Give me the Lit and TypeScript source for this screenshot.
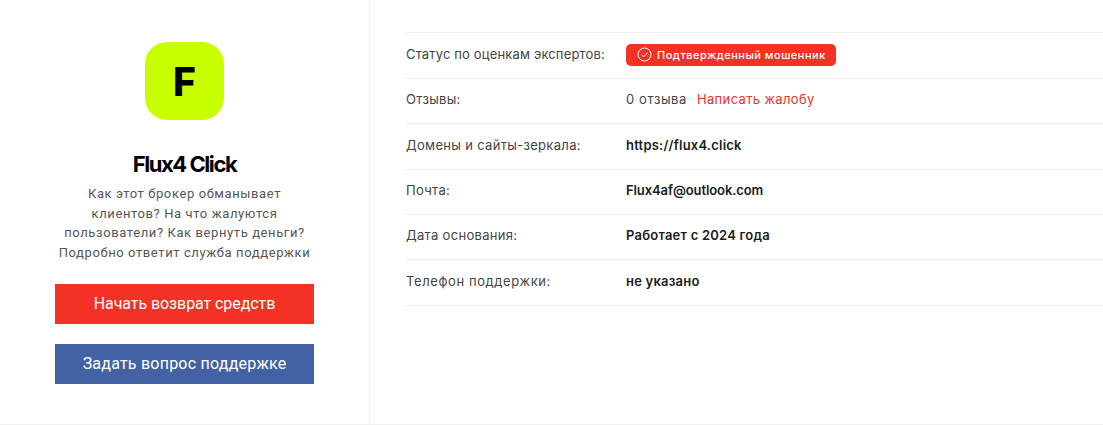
import { LitElement, html, css } from "lit";
import { customElement } from "lit/decorators.js";

const rows: [string, string, string, string][] = [
  ["Домены и сайты-зеркала:", "https://flux4.click", "url", ""],
  ["Почта:", "Flux4af@outlook.com", "mail", ""],
  ["Дата основания:", "Работает с 2024 года", "", ""],
  ["Телефон поддержки:", "не указано", "", "wide"],
];

@customElement("app-root")
export class AppRoot extends LitElement {
  static styles = css`
    :host { display: block; width: 1103px; height: 425px; overflow: hidden; background: #fff; font-family: "Open Sans", sans-serif; }
    .page { display: flex; height: 424px; border-bottom: 1px solid #f0f0f0; }
    .side { box-sizing: border-box; border-right: 1px solid #f0f0f0; flex: none; display: flex; flex-direction: column; align-items: center; padding: 42px 55px 0 55px; width: 370px; }
    .logo { width: 79px; height: 78px; border-radius: 22px; background: #c8ff00; display: flex; align-items: center; justify-content: center; font: 800 39px Inter, sans-serif; color: #000; }
    h1 { margin: 30px 0 0; font: 700 22px/28px Inter, sans-serif; letter-spacing: -1.45px; color: #000; white-space: nowrap; }
    .desc { margin: 6px -10px 0; font: 400 13px/19.7px Roboto, sans-serif; letter-spacing: 0.6px; color: #555; text-align: center; white-space: nowrap; }
    .btn { width: 259px; height: 40px; display: flex; align-items: center; justify-content: center; color: #fff; font: 400 16px Roboto, sans-serif; padding-bottom: 1px; box-sizing: border-box; }
    .red { background: #f33124; margin-top: 21px; letter-spacing: -0.08px; }
    .blue { background: #4262a3; margin-top: 20px; letter-spacing: 0.22px; }
    .main { flex: 1; padding: 32px 0 0 35px; min-width: 0; }
    .row { height: 45px; box-sizing: border-box; border-top: 1px solid #eeeeee; display: flex; align-items: center; padding: 0 0 5px 1px; font: 400 13px Inter, sans-serif; color: #444; }
    .row:nth-child(odd) { height: 46px; padding-bottom: 3px; }
    .row:nth-child(5) { height: 45px; padding-bottom: 5px; }
    .row.last { border-bottom: 1px solid #eeeeee; height: 47px; padding-bottom: 3px; }
    .k { width: 220px; flex: none; letter-spacing: 0.32px; }
    .k.status { letter-spacing: 0.15px; }
    .k.wide { letter-spacing: 0.6px; }
    .v { font-weight: 600; color: #1c1c1c; letter-spacing: 0.22px; }
    .v.mail { letter-spacing: -0.1px; }
    .plain { color: #444; font-weight: 400; letter-spacing: 0.6px; }
    .link { color: #f33124; margin-left: 10px; font-weight: 400; letter-spacing: 0.35px; }
    .badge { display: inline-flex; align-items: center; gap: 5px; height: 22px; width: 210px; box-sizing: border-box; padding-left: 11px; margin-top: 1px; background: #f33124; color: #fff; border-radius: 5px; font: 500 11px Inter, sans-serif; letter-spacing: 0.5px; white-space: nowrap; }
    .badge svg { display: block; flex: none; }
  `;

  render() {
    return html`<div class="page">
      <div class="side">
        <div class="logo">F</div>
        <h1>Flux4 Click</h1>
        <div class="desc">Как этот брокер обманывает<br />клиентов? На что жалуются<br />пользователи? Как вернуть деньги?<br />Подробно ответит служба поддержки</div>
        <div class="btn red">Начать возврат средств</div>
        <div class="btn blue">Задать вопрос поддержке</div>
      </div>
      <div class="main">
        <div class="row">
          <div class="k status">Статус по оценкам экспертов:</div>
          <div class="badge">
            <svg width="15" height="15" viewBox="0 0 15 15" fill="none" stroke="#fff"><circle cx="7.5" cy="7.5" r="6.5" /><path d="M4.6 7.8l2.1 2.1 3.8-4.2" /></svg>
            Подтвержденный мошенник
          </div>
        </div>
        <div class="row">
          <div class="k">Отзывы:</div>
          <div class="plain">0 отзыва</div>
          <div class="link">Написать жалобу</div>
        </div>
        ${rows.map(
          ([k, v, c, w], i) => html`<div class="row ${i === rows.length - 1 ? "last" : ""}">
            <div class="k ${w}">${k}</div>
            <div class="v ${c}">${v}</div>
          </div>`
        )}
      </div>
    </div>`;
  }
}
